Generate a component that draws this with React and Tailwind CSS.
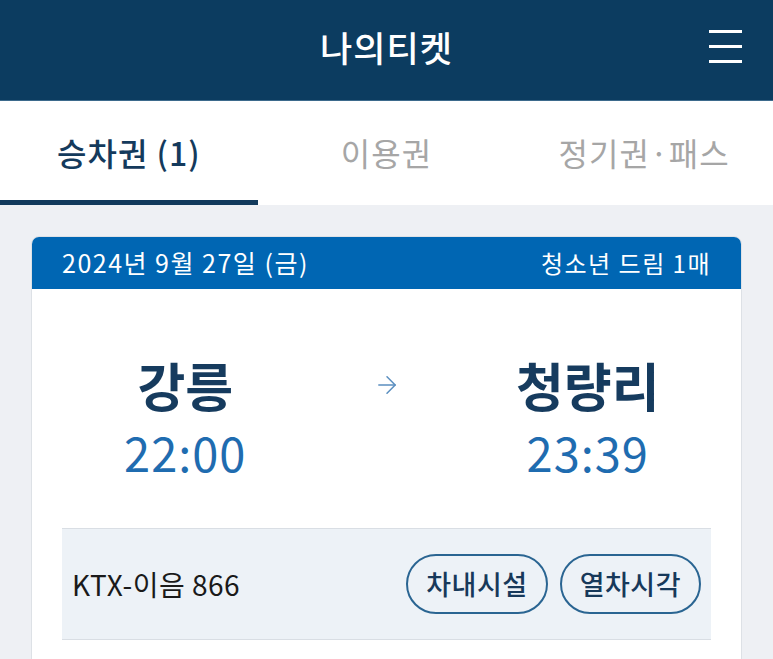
import { ArrowRight } from 'lucide-react'

const font = { fontFamily: '"Noto Sans CJK KR", "Noto Sans", sans-serif' }

const tabs = [
  { label: '승차권 (1)', active: true },
  { label: '이용권', active: false },
  { label: '정기권·패스', active: false },
]

function App() {
  return (
    <div className="min-h-[659px] w-[773px] overflow-hidden bg-[#eef0f4]" style={font}>
      <header className="relative flex h-[101px] items-center justify-center border-b border-[#3d6a8c] bg-[#0c3c60]">
        <h1 className="pb-[6px] text-[35px] font-medium tracking-[1px] text-white">나의티켓</h1>
        <button type="button" className="absolute right-[31px] top-[30px] flex w-[33px] flex-col gap-[12px]">
          <span className="h-[3px] w-full bg-white" />
          <span className="h-[3px] w-full bg-white" />
          <span className="h-[3px] w-full bg-white" />
        </button>
      </header>

      <nav className="grid h-[104px] grid-cols-3 bg-white">
        {tabs.map((tab) => (
          <div
            key={tab.label}
            className={
              tab.active
                ? 'flex items-center justify-center border-b-[5px] border-[#123a5c] pt-[3px] text-[32px] font-medium tracking-[1px] text-[#143a5c]'
                : 'flex items-center justify-center pb-[2px] text-[32px] tracking-[1px] text-[#a6a6a6]'
            }
          >
            {tab.label}
          </div>
        ))}
      </nav>

      <section className="mx-[31px] mt-[31px] overflow-hidden rounded-t-[8px] border border-[#dde1e6] bg-white">
        <div className="flex h-[52px] items-center justify-between bg-[#0066b3] px-[30px] text-white">
          <span className="text-[25px] tracking-[1.5px]">2024년 9월 27일 (금)</span>
          <span className="text-[24px] tracking-[1.5px]">청소년 드림 1매</span>
        </div>

        <div className="grid grid-cols-[1fr_96px_1fr] pb-[48px] pt-[66px]">
          <div className="flex flex-col items-center">
            <span className="text-[52px] font-bold leading-[60px] text-[#163b5e]">강릉</span>
            <span className="mt-[9px] text-[47px] leading-[56px] tracking-[1px] text-[#1f6cb0]">22:00</span>
          </div>
          <div className="flex justify-center pt-[16px] text-[#5b8fc0]">
            <ArrowRight size={28} strokeWidth={1.3} />
          </div>
          <div className="flex flex-col items-center">
            <span className="text-[52px] font-bold leading-[60px] text-[#163b5e]">청량리</span>
            <span className="mt-[9px] text-[47px] leading-[56px] tracking-[1px] text-[#1f6cb0]">23:39</span>
          </div>
        </div>

        <div className="mx-[30px] flex h-[112px] items-center justify-between border-y border-[#d9dee4] bg-[#edf2f7] px-[10px]">
          <span className="text-[28px] tracking-[0.5px] text-[#1a1a1a]">KTX-이음 866</span>
          <div className="flex gap-[12px]">
            <button
              type="button"
              className="h-[60px] rounded-full border-2 border-[#2a6592] px-[18px] text-[27px] font-medium tracking-[0.5px] text-[#17395a]"
            >
              차내시설
            </button>
            <button
              type="button"
              className="h-[60px] rounded-full border-2 border-[#2a6592] px-[18px] text-[27px] font-medium tracking-[0.5px] text-[#17395a]"
            >
              열차시각
            </button>
          </div>
        </div>
        <div className="h-[40px]" />
      </section>
    </div>
  )
}

export default App
